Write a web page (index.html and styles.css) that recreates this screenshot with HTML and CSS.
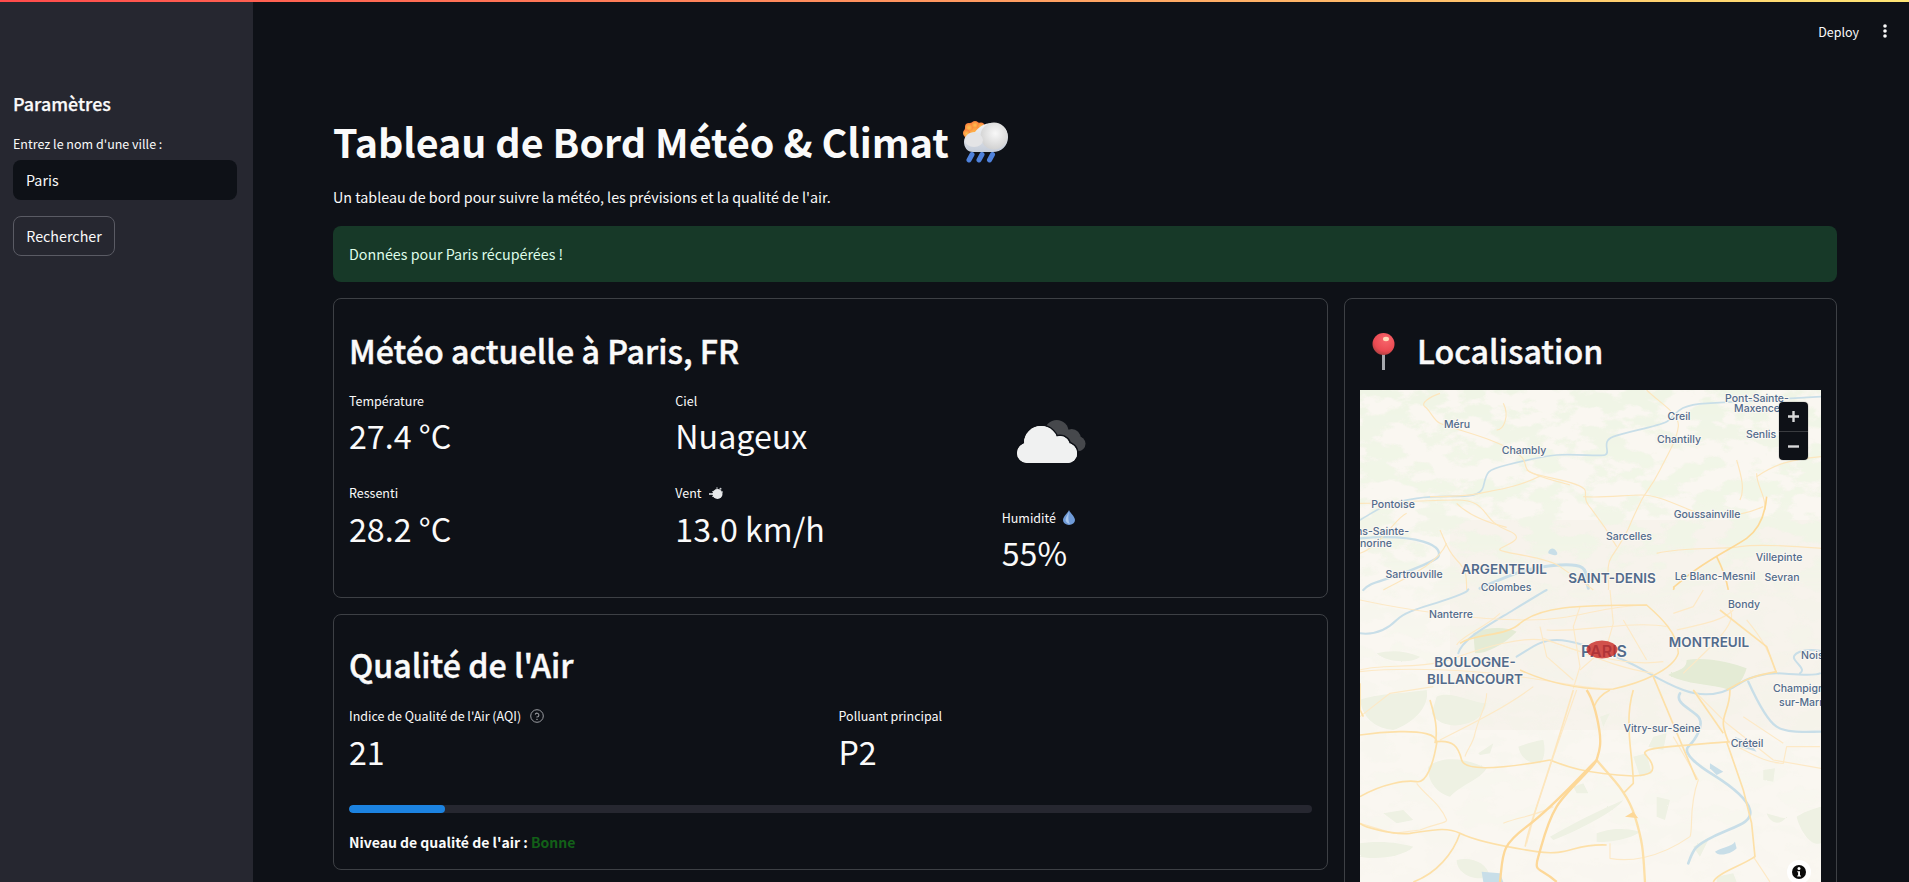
FILE: index.html
```html
<!DOCTYPE html>
<html lang="fr">
<head>
<meta charset="utf-8">
<title>Tableau de Bord Météo &amp; Climat</title>
<link rel="stylesheet" href="styles.css">
</head>
<body>
<div class="topline"></div>
<div class="app">
  <aside class="sidebar">
    <h3 class="side-title">Paramètres</h3>
    <label class="side-label" for="city">Entrez le nom d'une ville :</label>
    <input class="side-input" id="city" value="Paris">
    <button class="side-btn">Rechercher</button>
  </aside>
  <main class="main">
    <header class="header">
      <span class="deploy">Deploy</span>
      <svg class="kebab" width="4" height="14" viewBox="0 0 4 14"><circle cx="2" cy="2" r="1.8"/><circle cx="2" cy="7" r="1.8"/><circle cx="2" cy="12" r="1.8"/></svg>
    </header>
    <h1 class="title">Tableau de Bord Météo &amp; Climat
      <svg class="title-icon" width="45" height="42" viewBox="0 0 45 42">
        <defs>
          <linearGradient id="cl" x1="0" y1="0" x2="0" y2="1"><stop offset="0" stop-color="#f4f4f4"/><stop offset="1" stop-color="#c4ccd9"/></linearGradient>
          <radialGradient id="cl2" cx=".55" cy=".4" r=".6"><stop offset="0" stop-color="#f8f8f8"/><stop offset="1" stop-color="#d2d2d2"/></radialGradient>
          <radialGradient id="sn" cx=".5" cy=".6" r=".6"><stop offset="0" stop-color="#ffc24d"/><stop offset="1" stop-color="#fb7e3c"/></radialGradient>
        </defs>
        <g fill="url(#sn)"><circle cx="12" cy="12" r="11"/><circle cx="6" cy="6" r="4"/><circle cx="12" cy="3.5" r="3.5"/><circle cx="18" cy="5" r="3.5"/><circle cx="3.500" cy="12" r="3.500"/></g>
        <path d="M10 31 C4 31 1 26 1 21 C1 15 6 11 12 11 C15 7 20 2 30 2 C39 2 45 8 45 16 C45 25 38 31 30 31 Z" fill="url(#cl)"/>
        <circle cx="31" cy="15" r="13.500" fill="url(#cl2)"/>
        <ellipse cx="11" cy="19" rx="9" ry="7" fill="#e4e4e6"/>
        <g stroke="#4f82dc" stroke-width="5" stroke-linecap="round"><path d="M9 33.500 6 39"/><path d="M19 33.500 16 39"/><path d="M29.500 33.500 26.500 39"/></g>
      </svg>
    </h1>
    <p class="desc">Un tableau de bord pour suivre la météo, les prévisions et la qualité de l'air.</p>
    <div class="alert">Données pour Paris récupérées !</div>
    <div class="layout">
      <div class="left">
        <section class="card">
          <h2 class="card-title">Météo actuelle à Paris, FR</h2>
          <div class="cols3">
            <div class="col">
              <div class="metric"><div class="m-label">Température</div><div class="m-value">27.4 °C</div></div>
              <div class="metric"><div class="m-label">Ressenti</div><div class="m-value">28.2 °C</div></div>
            </div>
            <div class="col">
              <div class="metric"><div class="m-label">Ciel</div><div class="m-value">Nuageux</div></div>
              <div class="metric"><div class="m-label">Vent
                <svg class="m-icon" width="14" height="13" viewBox="0 0 14 13"><path d="M0 7h6" stroke="#c9ccd0" stroke-width="1.800"/><path d="M3 4.500h4M3 9.500h4" stroke="#9a9da1" stroke-width="1"/><circle cx="8.500" cy="7" r="5" fill="#e8eaec"/><circle cx="11.500" cy="1.800" r="1" fill="#c9ccd0"/><circle cx="13.300" cy="5" r=".8" fill="#aeb2b6"/><circle cx="8" cy="1.100" r=".8" fill="#aeb2b6"/></svg>
              </div><div class="m-value">13.0 km/h</div></div>
            </div>
            <div class="col col-icon">
              <svg class="w-icon" width="100" height="100" viewBox="0 0 100 100">
                <g fill="#46484c"><circle cx="54.700" cy="41" r="12"/><circle cx="69.700" cy="47" r="9"/><circle cx="76" cy="52.700" r="7.500"/><rect x="50" y="45" width="26" height="15"/></g>
                <g fill="#f0f1f1" stroke="#0e1117" stroke-width="3" paint-order="stroke"><circle cx="39" cy="52" r="17"/><circle cx="58" cy="55" r="10"/><circle cx="66" cy="63" r="9"/><rect x="15" y="52" width="60" height="20" rx="10"/></g>
                <g fill="#f0f1f1"><circle cx="39" cy="52" r="17"/><circle cx="58" cy="55" r="10"/><circle cx="66" cy="63" r="9"/><rect x="15" y="52" width="60" height="20" rx="10"/></g>
              </svg>
              <div class="metric"><div class="m-label">Humidité
                <svg class="m-icon drop" width="12" height="15" viewBox="0 0 12 15"><path d="M6 0C7 3 12 6.500 12 10A6 5 0 0 1 0 10C0 6.500 5 3 6 0Z" fill="#6f9bd8"/><path d="M6 1C5.500 4 3 6 2.500 10 3 12.500 5 13.500 7 14 4.500 11 5.500 5 6 1Z" fill="#a9c6ec"/></svg>
              </div><div class="m-value">55%</div></div>
            </div>
          </div>
        </section>
        <section class="card card-air">
          <h2 class="card-title">Qualité de l'Air</h2>
          <div class="cols2">
            <div class="metric"><div class="m-label">Indice de Qualité de l'Air (AQI)
              <svg class="m-help" width="14" height="14" viewBox="0 0 14 14" fill="none" stroke="#9a9ca1"><circle cx="7" cy="7" r="6.300"/><path d="M5.200 5.500A1.900 1.900 0 1 1 7 8V8.500" stroke-width="1.100"/><circle cx="7" cy="10.300" r=".35"/></svg>
            </div><div class="m-value">21</div></div>
            <div class="metric"><div class="m-label">Polluant principal</div><div class="m-value">P2</div></div>
          </div>
          <div class="bar"><div class="bar-fill" style="width:10%"></div></div>
          <p class="status"><strong>Niveau de qualité de l'air : <span class="good">Bonne</span></strong></p>
        </section>
      </div>
      <section class="card right">
        <h2 class="card-title with-pin">
          <svg class="pin" width="24" height="38" viewBox="0 0 24 38">
            <defs><radialGradient id="pn" cx=".6" cy=".3" r=".75"><stop offset="0" stop-color="#f8666c"/><stop offset=".7" stop-color="#ea4a52"/><stop offset="1" stop-color="#a8403f"/></radialGradient></defs>
            <rect x="10" y="18" width="3" height="19" fill="#a6a9ae"/>
            <circle cx="11.500" cy="11" r="11" fill="url(#pn)"/>
            <ellipse cx="14" cy="6" rx="3" ry="2.200" fill="#ffd9b8"/>
          </svg>
          Localisation
        </h2>
        <div class="map">
          <svg class="map-svg" width="461" height="504" viewBox="0 0 461 504">
            <defs>
              <filter id="patch2" x="0" y="0" width="100%" height="100%">
                <feTurbulence type="fractalNoise" baseFrequency=".03 .055" numOctaves="5" seed="7" result="n"/>
                <feColorMatrix in="n" values="0 0 0 0 .87  0 0 0 0 .91  0 0 0 0 .79  9 0 0 0 -4.150"/>
              </filter>
              <filter id="rough"><feTurbulence type="fractalNoise" baseFrequency=".09" numOctaves="2" seed="3"/><feDisplacementMap in="SourceGraphic" scale="5"/></filter>
              <linearGradient id="fade" x1="0" y1="0" x2="0" y2="1"><stop offset="0" stop-color="#fff"/><stop offset=".3" stop-color="#ddd"/><stop offset=".42" stop-color="#444"/><stop offset="1" stop-color="#111"/></linearGradient>
              <mask id="topmask"><rect width="461" height="504" fill="url(#fade)"/></mask>
            </defs>
            <rect width="461" height="504" fill="#faf7f1"/>
            <rect x="90" y="130" width="371" height="210" fill="#f7f3ec"/>
            <g mask="url(#topmask)"><rect width="461" height="504" filter="url(#patch2)"/></g>
            <!-- upper area -->
            <g transform="translate(-20,-100) scale(.3333)" fill="none">
              <g stroke="#c8dee8" stroke-width="5" stroke-linecap="round">
                <path d="M1443 320C1350 325 1200 335 1100 340S1010 380 980 395 860 425 820 440 815 490 795 495 700 490 650 495 560 510 500 525 440 545 430 590 330 610 230 625 130 650 60 690"/>
                <path d="M60 745C120 740 200 740 250 755S300 790 295 800 220 840 160 860 90 880 70 900" stroke-width="7"/>
                <path d="M420 895C500 860 560 830 660 825S730 850 745 895" stroke-width="9"/>
              </g>
              <path d="M625 785C632 772 642 772 650 785S640 798 625 790Z" fill="#c8dee8"/>
              <g stroke="#fde6bd" stroke-width="3.500" stroke-linejoin="round">
                <path d="M920 300C960 340 1020 370 1015 410S985 490 960 540 915 610 905 630 880 680 870 705 835 770 815 800 810 870 805 900"/>
                <path d="M300 310C270 320 240 340 255 350S280 390 300 400 400 430 450 450 550 490 555 520 570 550 640 565 730 590 735 600 730 625 745 645 790 700 830 770"/>
                <path d="M730 620C780 625 860 615 905 615S1000 640 1050 660 1180 690 1270 650"/>
                <path d="M1190 510C1205 560 1215 600 1200 630M1250 550C1250 590 1280 620 1275 660"/>
                <path d="M60 640C150 640 250 630 350 630S420 690 500 720 470 770 480 780 620 800 660 830 740 880 760 900"/>
                <path d="M350 640C390 680 450 700 500 712"/>
                <path d="M600 558C540 590 470 600 420 610S320 620 270 620"/>
                <path d="M300 720C310 740 320 780 350 810S380 860 380 900"/>
                <path d="M950 790C1040 770 1140 780 1200 770S1380 770 1443 775"/>
                <path d="M560 540C600 565 640 570 690 585"/>
                <path d="M60 790C120 770 170 680 200 670"/>
                <path d="M130 900C180 870 290 830 320 760"/>
                <path d="M490 340C510 380 490 420 470 420"/>
                <path d="M1250 560C1310 520 1350 510 1443 500"/>
              </g>
              <g stroke="#fdd996" stroke-width="5" stroke-linejoin="round">
                <path d="M1280 620C1275 680 1255 720 1220 745S1100 810 1040 860 1010 880 1000 900"/>
                <path d="M1130 800C1150 840 1160 870 1165 900"/>
              </g>
            </g>
            <!-- lower area -->
            <g transform="translate(-20,200) scale(.3333)" fill="none">
              <g fill="#eef1e3" filter="url(#rough)">
                <path d="M1040 210C1100 200 1180 220 1220 235 1210 270 1190 295 1170 300 1110 280 1040 285 985 255 1010 240 1040 240 1040 210Z" fill="#e4ebd5"/>
                <path d="M535 470C560 460 600 450 610 450 618 480 612 510 600 520 570 520 545 510 535 470Z"/>
                <path d="M290 320C330 300 400 340 440 340 430 380 400 400 360 405 330 410 290 400 275 370Z"/>
                <path d="M265 530C300 500 370 500 440 535 420 570 370 580 330 620 290 610 260 570 265 530Z"/>
                <path d="M60 330C110 310 200 310 260 300 270 350 220 400 160 420 110 415 70 390 60 330Z"/>
                <path d="M400 130C440 110 500 110 530 125 490 165 440 190 405 190Z" fill="#e4ebd5"/>
                <path d="M630 740C700 700 780 660 850 630 830 660 720 720 640 750Z"/>
                <path d="M770 730C800 720 840 710 900 725 880 745 800 760 770 755Z"/>
                <path d="M950 620 990 630 975 690 950 680Z"/>
                <path d="M880 500 920 490 935 550 900 560Z"/>
                <path d="M415 490 460 460 450 490 420 495Z"/>
                <path d="M110 190C150 180 190 180 240 200 220 220 140 220 110 190Z"/>
                <path d="M1370 680C1400 660 1443 650 1443 650V760C1410 770 1380 720 1370 680Z"/>
                <path d="M1280 670C1310 680 1350 690 1340 680 1320 710 1290 700 1280 670Z"/>
                <path d="M1270 540 1305 535 1300 575 1270 570Z"/>
                <path d="M700 590 730 580 745 610 710 610Z"/>
                <path d="M130 670 190 660 220 690 170 700Z"/>
                <path d="M60 760C130 750 180 760 220 770 190 800 110 810 60 800Z"/>
                <path d="M1060 770 1110 740 1080 800Z"/>
                <path d="M940 440 980 430 970 480 925 470Z"/>
                <path d="M780 380 810 370 790 410Z"/>
                <path d="M350 810C400 800 440 820 450 860 400 876 350 850 350 810Z"/>
                <path d="M1130 860 1180 850 1190 876H1130Z"/>
              </g>
              <g stroke="#c8dee8" stroke-width="6" stroke-linecap="round">
                <path d="M60 130C100 135 140 120 170 90S260 50 330 25 380 0 385 -2"/>
                <path d="M355 190C365 150 430 115 520 60S620 0 620 0"/>
                <path d="M530 200C580 170 600 150 650 150S780 180 850 210 950 270 1030 300 1170 300 1200 280 1280 250 1310 250 1420 260 1440 250"/>
                <path d="M1020 310C1005 335 1040 350 1070 375S1065 450 1045 470 1080 530 1120 555 1220 620 1230 660 1180 710 1120 740 1060 780 1045 820 1020 876" stroke-width="8"/>
                <path d="M1440 182C1390 175 1350 190 1365 210S1395 240 1380 250"/>
                <path d="M1225 275C1250 330 1280 390 1310 410S1400 425 1443 425" stroke-width="7"/>
              </g>
              <g fill="#c8dee8">
                <path d="M1110 520 1150 545 1130 555 1110 535Z"/>
                <path d="M1125 785C1150 770 1175 770 1185 755L1190 775C1170 795 1135 800 1125 785Z"/>
                <path d="M425 845 480 850 490 876H430Z"/>
                <path d="M1185 440 1230 460 1250 485 1200 470Z"/>
              </g>
              <g stroke="#fde9c6" stroke-width="3.500" stroke-linejoin="round">
                <path d="M60 30C200 60 400 90 560 90S760 50 920 45"/>
                <path d="M60 240C130 220 240 240 340 205S540 140 610 150 800 230 940 250"/>
                <path d="M60 245C200 230 400 240 540 260S700 290 780 295"/>
                <path d="M600 110 620 200 700 270M720 50 700 110 720 230 700 295M810 0 820 100 800 170 720 240M850 90 920 210M1090 0 1060 50 1000 70"/>
                <path d="M620 120C700 130 880 90 980 110M610 145C720 190 860 230 970 215"/>
                <path d="M350 165C360 140 440 110 480 70"/>
                <path d="M60 380 150 310 280 290"/>
                <path d="M1030 250C1090 190 1200 100 1170 60M1010 120C1100 100 1150 90 1180 60"/>
                <path d="M1220 90C1270 150 1290 190 1305 240"/>
                <path d="M1060 300 1160 400 1300 510 1443 535"/>
                <path d="M1440 470H1340L1330 520C1270 520 1220 480 1160 455"/>
                <path d="M1210 380 1330 460"/>
                <path d="M60 700 160 730 240 720C290 700 320 700 320 690 300 640 260 620 230 580"/>
                <path d="M440 310C440 350 420 370 405 430 400 460 380 480 375 500"/>
                <path d="M580 290C500 350 400 400 300 450"/>
                <path d="M810 760V805C860 815 950 810 1050 740 1060 720 1045 650 1075 570L1000 440"/>
                <path d="M560 760 590 650 640 500 710 300"/>
                <path d="M490 700C540 680 580 680 640 650"/>
                <path d="M1240 800C1260 830 1280 860 1290 876"/>
              </g>
              <g stroke="#fde0a8" stroke-width="5" stroke-linejoin="round">
                <path d="M880 300C850 400 880 500 880 580L850 610"/>
                <path d="M770 510C810 560 860 600 885 680S910 790 915 876" stroke-width="7"/>
                <path d="M630 510C680 530 730 550 880 558 935 555 945 545 935 520S900 490 925 480 1050 465 1170 455"/>
                <path d="M1160 455 1210 600 1235 700 1245 800C1200 830 1130 850 1120 876"/>
                <path d="M700 300C670 400 630 530 590 650S560 760 555 770" stroke="#fde6bd"/>
                <path d="M60 620C130 580 200 570 230 575S280 520 290 460 60 435 60 435"/>
                <path d="M290 455C340 450 355 470 365 510S520 530 630 510"/>
                <path d="M270 330C285 380 295 420 285 460"/>
                <path d="M60 700C70 710 150 735 210 730 280 720 320 710 360 730S490 770 590 785 700 760 800 765"/>
                <path d="M220 876C290 850 340 790 360 730"/>
                <path d="M810 300C790 310 770 330 762 350"/>
                <path d="M1170 300C1170 350 1150 370 1150 400 1150 420 1160 440 1165 455"/>
                <path d="M1160 300C1200 280 1220 260 1310 245"/>
                <path d="M1140 60 1280 170 1310 250"/>
                <path d="M540 100C600 50 700 45 920 45 960 80 1015 130 1015 190 1000 240 900 280 820 297 740 300 640 285 540 240" stroke-width="4.500"/>
                <path d="M540 100C500 140 400 130 360 160"/>
                <path d="M1060 300 1150 430"/>
                <path d="M940 260 1070 570"/>
                <path d="M60 280V360L70 380"/>
              </g>
              <g stroke="#fdd898" stroke-width="7" stroke-linejoin="round">
                <path d="M740 300C760 330 770 370 778 420S775 490 770 510 680 600 650 650 610 750 595 800 600 830 650 876"/>
                <path d="M770 510C720 560 640 650 560 710S490 790 480 876"/>
              </g>
              <path d="M855 680 880 665 895 685Z" fill="#fdd898"/>
            </g>
            <g class="lbl">
              <text x="397" y="12" text-anchor="middle">Pont-Sainte-</text>
              <text x="397" y="22" text-anchor="middle">Maxence</text>
              <text x="97" y="38" text-anchor="middle">Méru</text>
              <text x="319" y="30" text-anchor="middle">Creil</text>
              <text x="319" y="53" text-anchor="middle">Chantilly</text>
              <text x="401" y="48" text-anchor="middle">Senlis</text>
              <text x="164" y="64" text-anchor="middle">Chambly</text>
              <text x="33" y="118" text-anchor="middle">Pontoise</text>
              <text x="347" y="128" text-anchor="middle">Goussainville</text>
              <text x="49" y="145" text-anchor="end">Conflans-Sainte-</text>
              <text x="32" y="157" text-anchor="end">Honorine</text>
              <text x="269" y="150" text-anchor="middle">Sarcelles</text>
              <text x="419" y="171" text-anchor="middle">Villepinte</text>
              <text x="54" y="188" text-anchor="middle">Sartrouville</text>
              <text x="355" y="190" text-anchor="middle">Le Blanc-Mesnil</text>
              <text x="422" y="191" text-anchor="middle">Sevran</text>
              <text x="146" y="201" text-anchor="middle">Colombes</text>
              <text x="384" y="218" text-anchor="middle">Bondy</text>
              <text x="91" y="228" text-anchor="middle">Nanterre</text>
              <text x="441" y="269">Noisy</text>
              <text x="413" y="302">Champigny-</text>
              <text x="419" y="316">sur-Marne</text>
              <text x="302" y="342" text-anchor="middle">Vitry-sur-Seine</text>
              <text x="387" y="357" text-anchor="middle">Créteil</text>
            </g>
            <g class="lbl lbl-big">
              <text x="144" y="184" text-anchor="middle">ARGENTEUIL</text>
              <text x="252" y="193" text-anchor="middle">SAINT-DENIS</text>
              <text x="349" y="257" text-anchor="middle">MONTREUIL</text>
              <text class="lbl-paris" x="244" y="267" text-anchor="middle">PARIS</text>
              <text x="115" y="277" text-anchor="middle">BOULOGNE-</text>
              <text x="115" y="294" text-anchor="middle">BILLANCOURT</text>
            </g>
            <ellipse class="marker" cx="242" cy="259.500" rx="15.500" ry="9"/>
          </svg>
          <div class="zoom">
            <div class="zoom-btn">
              <svg width="13" height="13" viewBox="0 0 13 13"><path d="M6.500 1V12M1 6.500H12" stroke="#d8d9da" stroke-width="2.400"/></svg>
            </div>
            <div class="zoom-btn">
              <svg width="13" height="13" viewBox="0 0 13 13"><path d="M1 6.500H12" stroke="#d8d9da" stroke-width="2.400"/></svg>
            </div>
          </div>
          <div class="attrib">
            <svg width="14" height="14" viewBox="0 0 14 14"><circle cx="7" cy="7" r="7" fill="#0b0b0b"/><circle cx="7" cy="3.600" r="1.500" fill="#fff"/><path d="M5.300 6.200H8V10.500H9V11.500H5.200V10.500H6.100V7.200H5.300Z" fill="#fff"/></svg>
          </div>
        </div>
      </section>
    </div>
  </main>
</div>
</body>
</html>
```
FILE: styles.css
```css
* { box-sizing: border-box; }
html, body { margin: 0; height: 100%; overflow: hidden; }
body {
  background: #0e1117;
  color: #fafafa;
  font-family: "Noto Sans CJK SC", "Noto Sans", sans-serif;
  font-size: 14.300px;
}
.topline { height: 2px; background: linear-gradient(90deg, #ff4b4b, #ffe675); }
.app { display: flex; height: calc(100vh - 2px); }

.sidebar {
  width: 253px;
  flex: none;
  background: #262730;
  padding: 90px 16px 0 13px;
  display: flex;
  flex-direction: column;
  align-items: flex-start;
}
.side-title { margin: 0 0 18px; padding-bottom: 2px; font-size: 17.900px; line-height: 22px; font-weight: 500; -webkit-text-stroke: .25px #fafafa; }
.side-label { font-size: 12.500px; line-height: 20px; margin-bottom: 6px; }
.side-input {
  width: 224px; height: 40px; border: 0; border-radius: 8px;
  background: #0e1117; color: #fafafa; padding: 0 13px 2px;
  font: inherit; outline: none;
}
.side-btn {
  margin-top: 16px; height: 40px; width: 102px; padding: 0 0 2px;
  background: transparent; color: #fafafa;
  border: 1px solid #5a5b64; border-radius: 8px;
  font: inherit;
}

.main { flex: 1; min-width: 0; padding: 0 72px 0 80px; }
.header { height: 58px; display: flex; align-items: center; justify-content: flex-end; margin-right: -72px; padding-right: 22px; gap: 24px; }
.deploy { font-size: 12.500px; }
.kebab { fill: #fafafa; }

.title { margin: 55px 0 0; padding-bottom: 2px; font-size: 39.400px; line-height: 51px; font-weight: 700; white-space: nowrap; display: flex; align-items: center; gap: 14px; }
.title-icon { margin-bottom: -2px; }
.desc { margin: 17px 0 0; line-height: 24px; }
.alert {
  margin-top: 17px; height: 56px; padding: 0 16px 2px;
  display: flex; align-items: center;
  background: #173928; color: #dffde9; border-radius: 8px;
}
.layout { display: grid; grid-template-columns: 995px 1fr; gap: 16px; margin-top: 16px; align-items: start; }
.left { display: flex; flex-direction: column; gap: 16px; }
.card { border: 1px solid #3d4045; border-radius: 8px; padding: 31.500px 15px 15px; }
.card-air { padding-top: 30px; }
.card-title { margin: 0; padding-bottom: 5px; font-size: 32.200px; line-height: 38px; font-weight: 500; -webkit-text-stroke: .45px #fafafa; }
.cols3 { display: grid; grid-template-columns: repeat(3, 1fr); gap: 16px; margin: 17px 0 1px; }
.cols2 { display: grid; grid-template-columns: repeat(2, 1fr); gap: 16px; margin-top: 18px; }
.col { display: flex; flex-direction: column; gap: 19px; }
.col-icon { gap: 18px; }
.m-label { font-size: 12.500px; line-height: 20px; display: flex; align-items: center; gap: 7px; }
.m-value { margin-top: 1.500px; padding-bottom: 6px; font-size: 32.200px; line-height: 46px; font-weight: 400; white-space: nowrap; }
.w-icon { display: block; margin-bottom: -1px; }
.m-help { margin-left: 2px; }
.bar { margin-top: 25px; height: 8px; border-radius: 4px; background: #262730; overflow: hidden; }
.bar-fill { height: 100%; background: #1c83e1; border-radius: 4px; }
.status { margin: 17px 0 0; line-height: 24px; font-size: 14px; }
.status strong { font-weight: 700; }
.good { color: #126018; }

.with-pin { display: flex; align-items: center; gap: 21px; padding-left: 12px; padding-bottom: 5px; }
.pin { flex: none; margin-bottom: -5px; }
.map { position: relative; margin-top: 16.500px; height: 504px; overflow: hidden; }
.map-svg { display: block; }
.lbl text { font-family: Inter, "Noto Sans", sans-serif; font-size: 10.500px; font-weight: 500; fill: #526b8c; stroke: #fbf8f2; stroke-width: 2px; paint-order: stroke; stroke-linejoin: round; }
.lbl-big text { font-size: 13.500px; font-weight: 600; }
.lbl-big .lbl-paris { font-size: 16px; }
.marker { fill: rgba(200, 40, 35, .8); }
.zoom { position: absolute; top: 12px; right: 13px; width: 29px; height: 58px; background: #0e1117; border-radius: 4px; box-shadow: 0 0 0 1px rgba(0,0,0,.08); }
.zoom-btn { height: 29px; display: flex; align-items: center; justify-content: center; }
.zoom-btn + .zoom-btn { border-top: 1px solid #3a3c40; }
.attrib { position: absolute; right: 10px; bottom: 10px; width: 24px; height: 24px; background: #fff; border-radius: 12px; display: flex; align-items: center; justify-content: center; }
```
